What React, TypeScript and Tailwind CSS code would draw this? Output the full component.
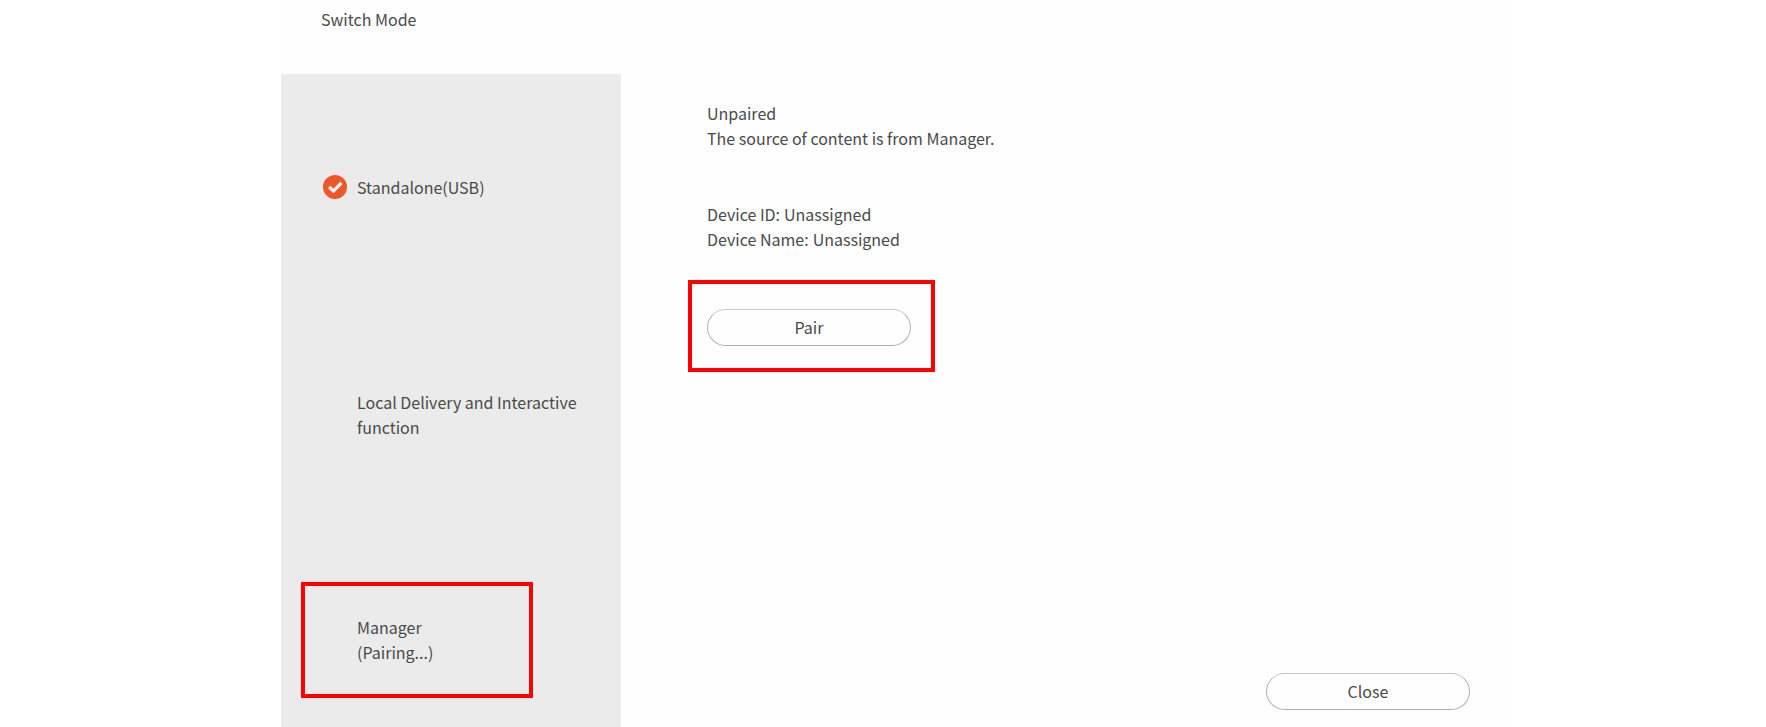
const modes = [
  { name: "Standalone(USB)", selected: true },
  { name: "Local Delivery and Interactive function", selected: false },
] as const;

const device = [
  { label: "Device ID:", value: "Unassigned" },
  { label: "Device Name:", value: "Unassigned" },
] as const;

function CheckIcon() {
  return (
    <svg viewBox="0 0 24 24" aria-hidden="true" className="h-6 w-6">
      <circle cx="12" cy="12" r="12" fill="#f0562b" />
      <path d="m6.2 12 4.2 4.1 8-8.2" fill="none" stroke="#fff" strokeWidth="3.2" />
    </svg>
  );
}

function PillButton({ label }: { label: string }) {
  return (
    <button
      type="button"
      className="h-[37px] w-[204px] rounded-full border border-[#b0b0b0] border-t-[#c8c8c8] text-center"
    >
      {label}
    </button>
  );
}

export default function App() {
  return (
    <div className="min-h-screen bg-white pr-64 pl-[281px] font-['Noto_Sans_CJK_SC',sans-serif] text-base leading-[25px] text-[#4a4a4a]">
      <div className="flex min-h-screen flex-col bg-[#fefefe]">
        <header className="h-[74px] shrink-0 px-10 pt-[7px]">
          <h1>Switch Mode</h1>
        </header>

        <div className="flex grow">
          <nav aria-label="Mode" className="w-[340px] shrink-0 bg-[#ebebeb] px-5 pt-[101px]">
            <ul>
              {modes.map((mode) => (
                <li key={mode.name} className="mb-[190px] last:mb-[142px]">
                  <button type="button" aria-pressed={mode.selected} className="flex w-full gap-2.5 pl-[22px] text-left">
                    <span className="w-6 shrink-0">{mode.selected && <CheckIcon />}</span>
                    <span>{mode.name}</span>
                  </button>
                </li>
              ))}
            </ul>
            <div className="flex h-[116px] w-[232px] items-center border-4 border-[#ff0000] pl-[52px]">
              <button type="button" className="text-left">
                Manager
                <br />
                (Pairing...)
              </button>
            </div>
          </nav>

          <main className="flex grow flex-col pt-[27px] pr-10 pb-[17px] pl-[67px]">
            <section className="pl-[19px]">
              <h2>Unpaired</h2>
              <p>The source of content is from Manager.</p>
              <dl className="mt-[51px]">
                {device.map((row) => (
                  <div key={row.label} className="flex gap-1">
                    <dt>{row.label}</dt>
                    <dd>{row.value}</dd>
                  </div>
                ))}
              </dl>
            </section>

            <div className="mt-7 flex h-[92px] w-[247px] items-start border-4 border-[#ff0000] pt-[25px] pl-[15px]">
              <PillButton label="Pair" />
            </div>

            <div className="mt-auto flex justify-end">
              <PillButton label="Close" />
            </div>
          </main>
        </div>
      </div>
    </div>
  );
}
